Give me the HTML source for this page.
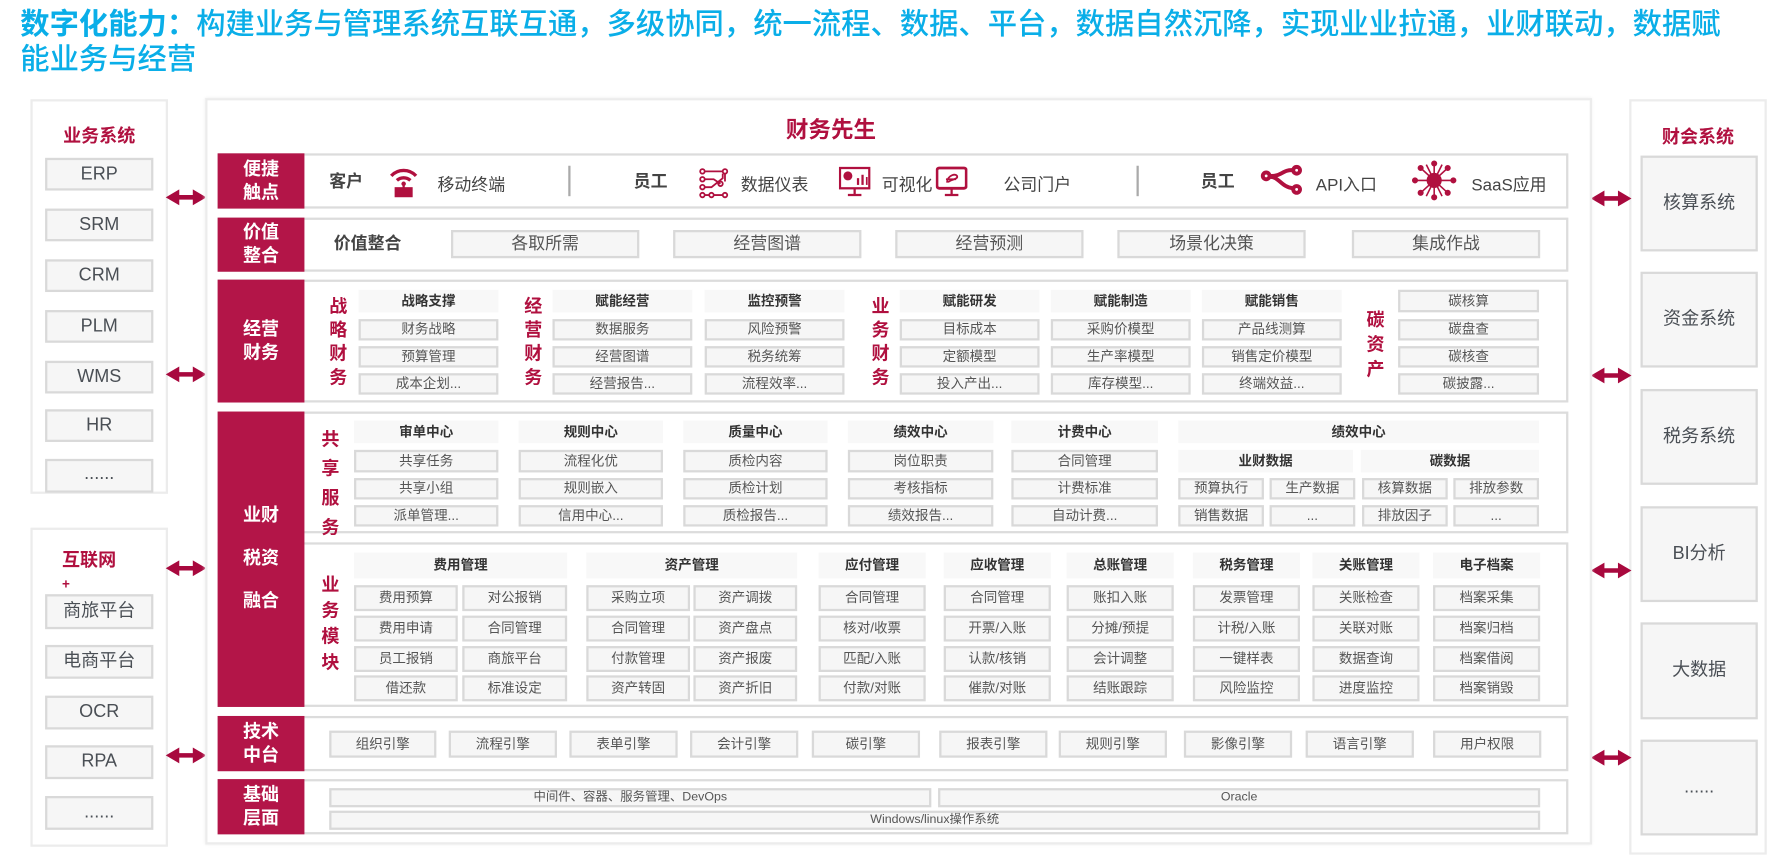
<!DOCTYPE html>
<html><head><meta charset="utf-8">
<style>
*{margin:0;padding:0}
body{width:1769px;height:859px;overflow:hidden;background:#fff;font-family:"Liberation Sans","Noto Sans CJK SC",sans-serif}
#w{position:absolute;left:0;top:0;width:1569px;height:762px;transform:scale(1.1275);transform-origin:0 0}
.a{position:absolute;box-sizing:border-box}
.c{position:absolute;box-sizing:border-box;background:#f6f6f6;border:2px solid #d9d9d9;text-align:center;color:#555;font-size:12px;white-space:nowrap;overflow:hidden}
.h{position:absolute;box-sizing:border-box;background:#f8f8f8;text-align:center;color:#333;font-weight:bold;font-size:12px;white-space:nowrap}
.row{position:absolute;box-sizing:border-box;border:2px solid #dcdcdc;background:#fff}
.lb{position:absolute;box-sizing:border-box;background:#b31548;color:#fff;font-weight:bold;font-size:16px;text-align:center;line-height:21px;display:flex;align-items:center;justify-content:center}
.cr{color:#b0103f;font-weight:bold}
.v{position:absolute;color:#b0103f;font-weight:bold;font-size:16px;width:20px;text-align:center;line-height:26px}
.sb{position:absolute;box-sizing:border-box;background:#f6f6f6;border:2px solid #d9d9d9;text-align:center;color:#4a4f55;font-size:16px}
.pn{position:absolute;box-sizing:border-box;border:2px solid #ececec;background:#fff}
.t{position:absolute;font-size:15px;color:#444;white-space:nowrap}
</style></head><body><div id="w">

<div class="a" style="left:18px;top:6px;width:1540px;font-size:26px;line-height:31px;color:#0aaee8;font-weight:500"><b>数字化能力：</b>构建业务与管理系统互联互通，多级协同，统一流程、数据、平台，数据自然沉降，实现业业拉通，业财联动，数据赋<br>能业务与经营</div>

<!-- left panel 1 -->
<div class="pn" style="left:27px;top:88px;width:122px;height:350px"></div>
<div class="a cr" style="left:27px;top:107px;width:122px;text-align:center;font-size:16px">业务系统</div>
<div class="sb" style="left:40px;top:140px;width:96px;height:29px;line-height:25px">ERP</div>
<div class="sb" style="left:40px;top:185px;width:96px;height:29px;line-height:25px">SRM</div>
<div class="sb" style="left:40px;top:230px;width:96px;height:29px;line-height:25px">CRM</div>
<div class="sb" style="left:40px;top:275px;width:96px;height:29px;line-height:25px">PLM</div>
<div class="sb" style="left:40px;top:320px;width:96px;height:29px;line-height:25px">WMS</div>
<div class="sb" style="left:40px;top:363px;width:96px;height:29px;line-height:25px">HR</div>
<div class="sb" style="left:40px;top:407px;width:96px;height:30px;line-height:24px">......</div>
<!-- left panel 2 -->
<div class="pn" style="left:27px;top:468px;width:122px;height:283px"></div>
<div class="a cr" style="left:55px;top:488px;font-size:16px;line-height:20px">互联网<br><span style="font-size:12px;line-height:10px">+</span></div>
<div class="sb" style="left:40px;top:527px;width:96px;height:31px;line-height:27px">商旅平台</div>
<div class="sb" style="left:40px;top:572px;width:96px;height:30px;line-height:26px">电商平台</div>
<div class="sb" style="left:40px;top:617px;width:96px;height:30px;line-height:26px">OCR</div>
<div class="sb" style="left:40px;top:661px;width:96px;height:30px;line-height:26px">RPA</div>
<div class="sb" style="left:40px;top:706px;width:96px;height:30px;line-height:26px">......</div>

<!-- right panel -->
<div class="pn" style="left:1445px;top:88px;width:122px;height:670px"></div>
<div class="a cr" style="left:1445px;top:108px;width:122px;text-align:center;font-size:16px">财会系统</div>
<div class="sb" style="left:1455px;top:138px;width:104px;height:85px;line-height:81px">核算系统</div>
<div class="sb" style="left:1455px;top:241px;width:104px;height:85px;line-height:81px">资金系统</div>
<div class="sb" style="left:1455px;top:345px;width:104px;height:85px;line-height:81px">税务系统</div>
<div class="sb" style="left:1455px;top:449px;width:104px;height:85px;line-height:81px">BI分析</div>
<div class="sb" style="left:1455px;top:552px;width:104px;height:86px;line-height:82px">大数据</div>
<div class="sb" style="left:1455px;top:656px;width:104px;height:85px;line-height:81px">......</div>

<!-- arrows -->
<svg class="a" style="left:0;top:0" width="1569" height="762">
<defs><polygon id="ar" points="0,7 12,0 12,5 24,5 24,0 36,7 24,14 24,9 12,9 12,14" fill="#a8093e"/></defs>
<use href="#ar" x="147" y="168"/><use href="#ar" x="147" y="325"/><use href="#ar" x="147" y="497"/><use href="#ar" x="147" y="663"/>
<use href="#ar" x="1411" y="169"/><use href="#ar" x="1411" y="326"/><use href="#ar" x="1411" y="499"/><use href="#ar" x="1411" y="665"/>
</svg>

<!-- core panel -->
<div class="pn" style="left:182px;top:87px;width:1230px;height:662px;box-shadow:0 0 3px #eee"></div>
<div class="a cr" style="left:637px;top:99px;width:200px;text-align:center;font-size:20px">财务先生</div>

<!-- row1 -->
<div class="row" style="left:193px;top:136px;width:1198px;height:49px"></div>
<div class="lb" style="left:193px;top:136px;width:77px;height:49px">便捷<br>触点</div>
<div class="t cr" style="left:292px;top:150px">客户</div>
<svg class="a" style="left:344px;top:147px" width="28" height="28" viewBox="0 0 28 28"><path d="M3 9 A15 15 0 0 1 25 9" stroke="#b0103f" stroke-width="3" fill="none"/><path d="M8 13 A9 9 0 0 1 20 13" stroke="#b0103f" stroke-width="3" fill="none"/><circle cx="14" cy="16" r="2" fill="#b0103f"/><rect x="13" y="16" width="2" height="4" fill="#b0103f"/><rect x="6" y="19" width="16" height="9" fill="#b0103f"/></svg>
<div class="t" style="left:388px;top:153px">移动终端</div>
<div class="a" style="left:504px;top:147px;width:2px;height:27px;background:#aaa"></div>
<div class="t cr" style="left:562px;top:150px">员工</div>
<svg class="a" style="left:619px;top:148px" width="28" height="28" viewBox="0 0 28 28" fill="none" stroke="#b0103f" stroke-width="1.6"><circle cx="4" cy="4" r="2"/><circle cx="24" cy="4" r="2"/><circle cx="4" cy="11" r="2"/><circle cx="4" cy="18" r="2"/><circle cx="4" cy="25" r="2"/><circle cx="24" cy="25" r="2"/><circle cx="12" cy="25" r="2"/><circle cx="20" cy="15" r="2"/><path d="M6 4H22M6 11H14L20 15M6 18H12L22 10V6M6 25H10M14 25H22M24 6V13"/></svg>
<div class="t" style="left:657px;top:153px">数据仪表</div>
<svg class="a" style="left:744px;top:147px" width="28" height="28" viewBox="0 0 28 28"><rect x="1" y="2" width="26" height="18" fill="#fff" stroke="#b0103f" stroke-width="2"/><circle cx="8" cy="9" r="4" fill="#b0103f"/><rect x="16" y="11" width="2" height="6" fill="#b0103f"/><rect x="20" y="8" width="2" height="9" fill="#b0103f"/><rect x="24" y="10" width="1.5" height="7" fill="#b0103f"/><path d="M14 20V25M8 26H20" stroke="#b0103f" stroke-width="2"/></svg>
<div class="t" style="left:782px;top:153px">可视化</div>
<svg class="a" style="left:830px;top:147px" width="28" height="28" viewBox="0 0 28 28"><rect x="1" y="2" width="26" height="18" rx="2" fill="#fff" stroke="#b0103f" stroke-width="2.5"/><path d="M10 15C10 8 19 6 19 10C19 12 11 13 11 15M9 12H18" stroke="#b0103f" stroke-width="1.6" fill="none"/><path d="M14 20V25M8 26H20" stroke="#b0103f" stroke-width="2"/></svg>
<div class="t" style="left:890px;top:153px">公司门户</div>
<div class="a" style="left:1008px;top:147px;width:2px;height:27px;background:#aaa"></div>
<div class="t cr" style="left:1065px;top:150px">员工</div>
<svg class="a" style="left:1118px;top:146px" width="38" height="28" viewBox="0 0 38 28" fill="none" stroke="#b0103f" stroke-width="3.5"><circle cx="5" cy="10" r="3"/><circle cx="32" cy="5" r="3"/><circle cx="32" cy="22" r="3"/><path d="M8 11C16 10 18 20 29 21M8 10C18 11 20 4 29 5"/></svg>
<div class="t" style="left:1167px;top:153px">API入口</div>
<svg class="a" style="left:1252px;top:142px" width="40" height="36" viewBox="0 0 40 36" stroke="#b0103f" stroke-width="1.4" fill="#b0103f"><path d="M20 18L20 3M20 18L8 7M20 18L32 7M20 18L3 18M20 18L37 18M20 18L8 29M20 18L32 29M20 18L20 33M20 18L13 4M20 18L27 4M20 18L13 32M20 18L27 32"/><circle cx="20" cy="18" r="6"/><circle cx="20" cy="3" r="2"/><circle cx="8" cy="7" r="2"/><circle cx="32" cy="7" r="2"/><circle cx="3" cy="18" r="2"/><circle cx="37" cy="18" r="2"/><circle cx="8" cy="29" r="2"/><circle cx="32" cy="29" r="2"/><circle cx="20" cy="33" r="2"/></svg>
<div class="t" style="left:1305px;top:153px">SaaS应用</div>

<!-- row2 -->
<div class="row" style="left:193px;top:193px;width:1198px;height:48px"></div>
<div class="lb" style="left:193px;top:193px;width:77px;height:48px">价值<br>整合</div>
<div class="t cr" style="left:296px;top:205px">价值整合</div>
<div class="c" style="left:400px;top:204px;width:167px;height:25px;line-height:21px;font-size:15px">各取所需</div>
<div class="c" style="left:597px;top:204px;width:167px;height:25px;line-height:21px;font-size:15px">经营图谱</div>
<div class="c" style="left:794px;top:204px;width:167px;height:25px;line-height:21px;font-size:15px">经营预测</div>
<div class="c" style="left:991px;top:204px;width:167px;height:25px;line-height:21px;font-size:15px">场景化决策</div>
<div class="c" style="left:1199px;top:204px;width:167px;height:25px;line-height:21px;font-size:15px">集成作战</div>

<!-- row3 经营财务 -->
<div class="row" style="left:193px;top:248px;width:1198px;height:109px"></div>
<div class="lb" style="left:193px;top:248px;width:77px;height:109px">经营<br>财务</div>
<div class="v" style="left:290px;top:262px;line-height:21px">战<br>略<br>财<br>务</div>
<div class="v" style="left:463px;top:262px;line-height:21px">经<br>营<br>财<br>务</div>
<div class="v" style="left:771px;top:262px;line-height:21px">业<br>务<br>财<br>务</div>
<div class="v" style="left:1210px;top:274px;line-height:22px">碳<br>资<br>产</div>

<div class="h" style="left:318px;top:257px;width:124px;height:20px;line-height:20px">战略支撑</div>
<div class="c" style="left:318px;top:283px;width:124px;height:19px;line-height:15px">财务战略</div>
<div class="c" style="left:318px;top:307px;width:124px;height:19px;line-height:15px">预算管理</div>
<div class="c" style="left:318px;top:331px;width:124px;height:19px;line-height:15px">成本企划...</div>

<div class="h" style="left:490px;top:257px;width:124px;height:20px;line-height:20px">赋能经营</div>
<div class="c" style="left:490px;top:283px;width:124px;height:19px;line-height:15px">数据服务</div>
<div class="c" style="left:490px;top:307px;width:124px;height:19px;line-height:15px">经营图谱</div>
<div class="c" style="left:490px;top:331px;width:124px;height:19px;line-height:15px">经营报告...</div>

<div class="h" style="left:625px;top:257px;width:124px;height:20px;line-height:20px">监控预警</div>
<div class="c" style="left:625px;top:283px;width:124px;height:19px;line-height:15px">风险预警</div>
<div class="c" style="left:625px;top:307px;width:124px;height:19px;line-height:15px">税务统筹</div>
<div class="c" style="left:625px;top:331px;width:124px;height:19px;line-height:15px">流程效率...</div>

<div class="h" style="left:798px;top:257px;width:124px;height:20px;line-height:20px">赋能研发</div>
<div class="c" style="left:798px;top:283px;width:124px;height:19px;line-height:15px">目标成本</div>
<div class="c" style="left:798px;top:307px;width:124px;height:19px;line-height:15px">定额模型</div>
<div class="c" style="left:798px;top:331px;width:124px;height:19px;line-height:15px">投入产出...</div>

<div class="h" style="left:932px;top:257px;width:124px;height:20px;line-height:20px">赋能制造</div>
<div class="c" style="left:932px;top:283px;width:124px;height:19px;line-height:15px">采购价模型</div>
<div class="c" style="left:932px;top:307px;width:124px;height:19px;line-height:15px">生产率模型</div>
<div class="c" style="left:932px;top:331px;width:124px;height:19px;line-height:15px">库存模型...</div>

<div class="h" style="left:1066px;top:257px;width:124px;height:20px;line-height:20px">赋能销售</div>
<div class="c" style="left:1066px;top:283px;width:124px;height:19px;line-height:15px">产品线测算</div>
<div class="c" style="left:1066px;top:307px;width:124px;height:19px;line-height:15px">销售定价模型</div>
<div class="c" style="left:1066px;top:331px;width:124px;height:19px;line-height:15px">终端效益...</div>

<div class="c" style="left:1240px;top:257px;width:125px;height:20px;line-height:16px">碳核算</div>
<div class="c" style="left:1240px;top:283px;width:125px;height:19px;line-height:15px">碳盘查</div>
<div class="c" style="left:1240px;top:307px;width:125px;height:19px;line-height:15px">碳核查</div>
<div class="c" style="left:1240px;top:331px;width:125px;height:19px;line-height:15px">碳披露...</div>

<!-- row4 业财税资融合 -->
<div class="row" style="left:193px;top:365px;width:1198px;height:108px"></div>
<div class="row" style="left:193px;top:481px;width:1198px;height:146px"></div>
<div class="lb" style="left:193px;top:365px;width:77px;height:262px;line-height:38px">业财<br>税资<br>融合</div>
<div class="v" style="left:283px;top:378px">共<br>享<br>服<br>务</div>
<div class="v" style="left:283px;top:508px;line-height:23px">业<br>务<br>模<br>块</div>

<div class="h" style="left:314px;top:373px;width:128px;height:20px;line-height:20px">审单中心</div>
<div class="c" style="left:314px;top:399px;width:128px;height:20px;line-height:16px">共享任务</div>
<div class="c" style="left:314px;top:424px;width:128px;height:19px;line-height:15px">共享小组</div>
<div class="c" style="left:314px;top:448px;width:128px;height:19px;line-height:15px">派单管理...</div>

<div class="h" style="left:460px;top:373px;width:128px;height:20px;line-height:20px">规则中心</div>
<div class="c" style="left:460px;top:399px;width:128px;height:20px;line-height:16px">流程化优</div>
<div class="c" style="left:460px;top:424px;width:128px;height:19px;line-height:15px">规则嵌入</div>
<div class="c" style="left:460px;top:448px;width:128px;height:19px;line-height:15px">信用中心...</div>

<div class="h" style="left:606px;top:373px;width:128px;height:20px;line-height:20px">质量中心</div>
<div class="c" style="left:606px;top:399px;width:128px;height:20px;line-height:16px">质检内容</div>
<div class="c" style="left:606px;top:424px;width:128px;height:19px;line-height:15px">质检计划</div>
<div class="c" style="left:606px;top:448px;width:128px;height:19px;line-height:15px">质检报告...</div>

<div class="h" style="left:752px;top:373px;width:129px;height:20px;line-height:20px">绩效中心</div>
<div class="c" style="left:752px;top:399px;width:129px;height:20px;line-height:16px">岗位职责</div>
<div class="c" style="left:752px;top:424px;width:129px;height:19px;line-height:15px">考核指标</div>
<div class="c" style="left:752px;top:448px;width:129px;height:19px;line-height:15px">绩效报告...</div>

<div class="h" style="left:897px;top:373px;width:130px;height:20px;line-height:20px">计费中心</div>
<div class="c" style="left:897px;top:399px;width:130px;height:20px;line-height:16px">合同管理</div>
<div class="c" style="left:897px;top:424px;width:130px;height:19px;line-height:15px">计费标准</div>
<div class="c" style="left:897px;top:448px;width:130px;height:19px;line-height:15px">自动计费...</div>

<div class="h" style="left:1045px;top:373px;width:320px;height:20px;line-height:20px">绩效中心</div>
<div class="h" style="left:1045px;top:399px;width:155px;height:20px;line-height:20px">业财数据</div>
<div class="h" style="left:1207px;top:399px;width:158px;height:20px;line-height:20px">碳数据</div>
<div class="c" style="left:1045px;top:424px;width:76px;height:19px;line-height:15px">预算执行</div>
<div class="c" style="left:1126px;top:424px;width:76px;height:19px;line-height:15px">生产数据</div>
<div class="c" style="left:1208px;top:424px;width:76px;height:19px;line-height:15px">核算数据</div>
<div class="c" style="left:1289px;top:424px;width:76px;height:19px;line-height:15px">排放参数</div>
<div class="c" style="left:1045px;top:448px;width:76px;height:19px;line-height:15px">销售数据</div>
<div class="c" style="left:1126px;top:448px;width:76px;height:19px;line-height:15px">...</div>
<div class="c" style="left:1208px;top:448px;width:76px;height:19px;line-height:15px">排放因子</div>
<div class="c" style="left:1289px;top:448px;width:76px;height:19px;line-height:15px">...</div>

<!-- 业务模块 -->
<div class="h" style="left:314px;top:490px;width:189px;height:23px;line-height:23px">费用管理</div>
<div class="h" style="left:520px;top:490px;width:187px;height:23px;line-height:23px">资产管理</div>
<div class="h" style="left:726px;top:490px;width:95px;height:23px;line-height:23px">应付管理</div>
<div class="h" style="left:837px;top:490px;width:95px;height:23px;line-height:23px">应收管理</div>
<div class="h" style="left:946px;top:490px;width:95px;height:23px;line-height:23px">总账管理</div>
<div class="h" style="left:1058px;top:490px;width:95px;height:23px;line-height:23px">税务管理</div>
<div class="h" style="left:1164px;top:490px;width:95px;height:23px;line-height:23px">关账管理</div>
<div class="h" style="left:1271px;top:490px;width:95px;height:23px;line-height:23px">电子档案</div>

<div class="c" style="left:314px;top:519px;width:92px;height:23px;line-height:19px">费用预算</div>
<div class="c" style="left:410px;top:519px;width:93px;height:23px;line-height:19px">对公报销</div>
<div class="c" style="left:520px;top:519px;width:92px;height:23px;line-height:19px">采购立项</div>
<div class="c" style="left:615px;top:519px;width:92px;height:23px;line-height:19px">资产调拨</div>
<div class="c" style="left:726px;top:519px;width:95px;height:23px;line-height:19px">合同管理</div>
<div class="c" style="left:837px;top:519px;width:95px;height:23px;line-height:19px">合同管理</div>
<div class="c" style="left:946px;top:519px;width:95px;height:23px;line-height:19px">账扣入账</div>
<div class="c" style="left:1058px;top:519px;width:95px;height:23px;line-height:19px">发票管理</div>
<div class="c" style="left:1164px;top:519px;width:95px;height:23px;line-height:19px">关账检查</div>
<div class="c" style="left:1271px;top:519px;width:95px;height:23px;line-height:19px">档案采集</div>

<div class="c" style="left:314px;top:546px;width:92px;height:23px;line-height:19px">费用申请</div>
<div class="c" style="left:410px;top:546px;width:93px;height:23px;line-height:19px">合同管理</div>
<div class="c" style="left:520px;top:546px;width:92px;height:23px;line-height:19px">合同管理</div>
<div class="c" style="left:615px;top:546px;width:92px;height:23px;line-height:19px">资产盘点</div>
<div class="c" style="left:726px;top:546px;width:95px;height:23px;line-height:19px">核对/收票</div>
<div class="c" style="left:837px;top:546px;width:95px;height:23px;line-height:19px">开票/入账</div>
<div class="c" style="left:946px;top:546px;width:95px;height:23px;line-height:19px">分摊/预提</div>
<div class="c" style="left:1058px;top:546px;width:95px;height:23px;line-height:19px">计税/入账</div>
<div class="c" style="left:1164px;top:546px;width:95px;height:23px;line-height:19px">关联对账</div>
<div class="c" style="left:1271px;top:546px;width:95px;height:23px;line-height:19px">档案归档</div>

<div class="c" style="left:314px;top:573px;width:92px;height:23px;line-height:19px">员工报销</div>
<div class="c" style="left:410px;top:573px;width:93px;height:23px;line-height:19px">商旅平台</div>
<div class="c" style="left:520px;top:573px;width:92px;height:23px;line-height:19px">付款管理</div>
<div class="c" style="left:615px;top:573px;width:92px;height:23px;line-height:19px">资产报废</div>
<div class="c" style="left:726px;top:573px;width:95px;height:23px;line-height:19px">匹配/入账</div>
<div class="c" style="left:837px;top:573px;width:95px;height:23px;line-height:19px">认款/核销</div>
<div class="c" style="left:946px;top:573px;width:95px;height:23px;line-height:19px">会计调整</div>
<div class="c" style="left:1058px;top:573px;width:95px;height:23px;line-height:19px">一键样表</div>
<div class="c" style="left:1164px;top:573px;width:95px;height:23px;line-height:19px">数据查询</div>
<div class="c" style="left:1271px;top:573px;width:95px;height:23px;line-height:19px">档案借阅</div>

<div class="c" style="left:314px;top:599px;width:92px;height:23px;line-height:19px">借还款</div>
<div class="c" style="left:410px;top:599px;width:93px;height:23px;line-height:19px">标准设定</div>
<div class="c" style="left:520px;top:599px;width:92px;height:23px;line-height:19px">资产转固</div>
<div class="c" style="left:615px;top:599px;width:92px;height:23px;line-height:19px">资产折旧</div>
<div class="c" style="left:726px;top:599px;width:95px;height:23px;line-height:19px">付款/对账</div>
<div class="c" style="left:837px;top:599px;width:95px;height:23px;line-height:19px">催款/对账</div>
<div class="c" style="left:946px;top:599px;width:95px;height:23px;line-height:19px">结账跟踪</div>
<div class="c" style="left:1058px;top:599px;width:95px;height:23px;line-height:19px">风险监控</div>
<div class="c" style="left:1164px;top:599px;width:95px;height:23px;line-height:19px">进度监控</div>
<div class="c" style="left:1271px;top:599px;width:95px;height:23px;line-height:19px">档案销毁</div>

<!-- 技术中台 -->
<div class="row" style="left:193px;top:635px;width:1198px;height:49px"></div>
<div class="lb" style="left:193px;top:635px;width:77px;height:49px">技术<br>中台</div>
<div class="c" style="left:292px;top:648px;width:95px;height:24px;line-height:20px">组织引擎</div>
<div class="c" style="left:398px;top:648px;width:96px;height:24px;line-height:20px">流程引擎</div>
<div class="c" style="left:505px;top:648px;width:96px;height:24px;line-height:20px">表单引擎</div>
<div class="c" style="left:612px;top:648px;width:96px;height:24px;line-height:20px">会计引擎</div>
<div class="c" style="left:720px;top:648px;width:96px;height:24px;line-height:20px">碳引擎</div>
<div class="c" style="left:833px;top:648px;width:96px;height:24px;line-height:20px">报表引擎</div>
<div class="c" style="left:939px;top:648px;width:96px;height:24px;line-height:20px">规则引擎</div>
<div class="c" style="left:1050px;top:648px;width:96px;height:24px;line-height:20px">影像引擎</div>
<div class="c" style="left:1158px;top:648px;width:96px;height:24px;line-height:20px">语言引擎</div>
<div class="c" style="left:1271px;top:648px;width:96px;height:24px;line-height:20px">用户权限</div>

<!-- 基础层面 -->
<div class="row" style="left:193px;top:691px;width:1198px;height:49px"></div>
<div class="lb" style="left:193px;top:691px;width:77px;height:49px">基础<br>层面</div>
<div class="c" style="left:292px;top:699px;width:534px;height:17px;line-height:13px;font-size:11px">中间件、容器、服务管理、DevOps</div>
<div class="c" style="left:832px;top:699px;width:534px;height:17px;line-height:13px;font-size:11px">Oracle</div>
<div class="c" style="left:292px;top:719px;width:1074px;height:17px;line-height:13px;font-size:11px">Windows/linux操作系统</div>

</div></body></html>
